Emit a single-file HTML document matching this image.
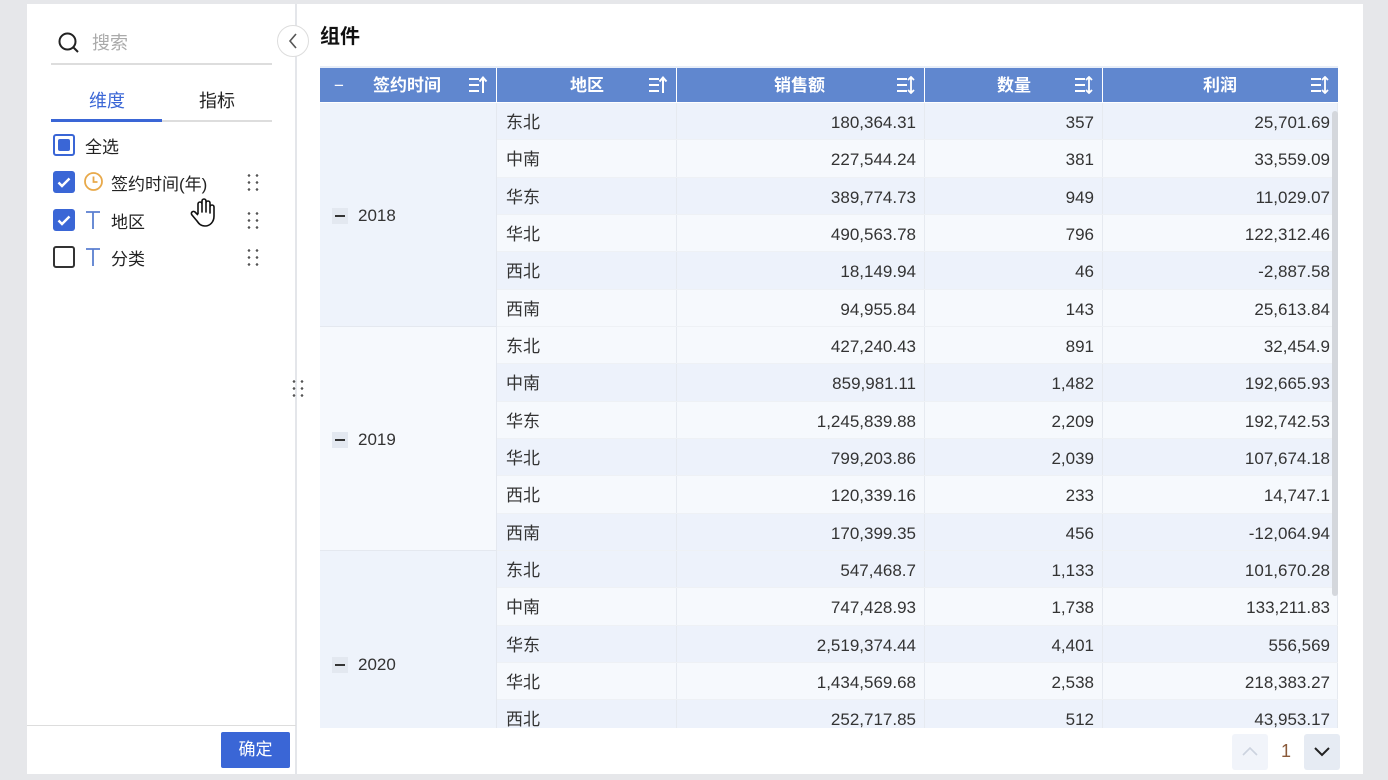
<!DOCTYPE html>
<html><head><meta charset="utf-8"><style>
*{box-sizing:border-box;margin:0;padding:0}
body{width:1388px;height:780px;background:#e6e7ea;font-family:"Liberation Sans","Noto Sans CJK SC",sans-serif;position:relative;overflow:hidden;color:#333}
.panel{position:absolute;left:27px;top:4px;width:1336px;height:770px;background:#fff}
.abs{position:absolute}
.cb{position:absolute;left:53px;width:22px;height:22px;border-radius:3px}
.on{background:#3a66d6}
.on svg{position:absolute;left:3px;top:3px}
.lbl{position:absolute;font-size:17px;color:#222}
.dots{position:absolute;left:245px;width:14px;height:20px;background-image:radial-gradient(circle,#555 1.2px,transparent 1.4px);background-size:8px 7px}
.hdr{position:absolute;top:68px;height:34px;background:#6087cf;color:#fff;font-weight:bold;font-size:17px;line-height:35px;border-right:1px solid #fff}
.sort{position:absolute;right:8px;top:8px}
.grid{position:absolute;left:320px;top:103px;width:1018px;height:625px;overflow:hidden}
.yr{position:absolute;left:0;width:177px;height:224px;border-right:1px solid #e4e8ef;border-bottom:1px solid #e4e8ef;font-size:17px}
.yr span.m{position:absolute;left:12px;width:16px;height:16px;background:#e3e8f0;top:105px}
.yr span.m:after{content:"";position:absolute;left:3px;top:7px;width:10px;height:1.5px;background:#333}
.yr b{position:absolute;left:38px;top:103px;font-weight:normal;color:#333}
.row{position:absolute;left:177px;width:841px;height:37.33px;font-size:17px;line-height:39px;display:flex;border-bottom:1px solid #eef1f5}
.row div{border-right:1px solid #e6eaf0;padding:0 8px;text-align:right;white-space:nowrap}
.row div:first-child{width:180px;text-align:left;padding-left:9px}
.row div:nth-child(2){width:248px}
.row div:nth-child(3){width:178px}
.row div:nth-child(4){width:235px;padding-right:7px}
.a{background:#edf2fb}.b{background:#f6f9fd}
.T{position:absolute;left:84px}
</style></head><body>
<div class="panel"></div>
<svg class="abs" style="left:57px;top:31px" width="24" height="24" viewBox="0 0 24 24"><circle cx="10.5" cy="10.5" r="8" fill="none" stroke="#222" stroke-width="2"/><path d="M16.5 16.5L21 21" stroke="#222" stroke-width="2"/></svg>
<div class="abs" style="left:92px;top:29px;font-size:18px;color:#aaa">搜索</div>
<div class="abs" style="left:51px;top:63px;width:221px;height:2px;background:#ddd"></div>
<div class="abs" style="left:89px;top:87px;font-size:18px;color:#3a66d6">维度</div>
<div class="abs" style="left:199px;top:87px;font-size:18px;color:#222">指标</div>
<div class="abs" style="left:51px;top:120px;width:221px;height:2px;background:#ddd"></div>
<div class="abs" style="left:51px;top:119px;width:111px;height:3px;background:#3a66d6"></div>
<div class="cb" style="top:134px;border:2px solid #3a66d6"><div style="position:absolute;left:3px;top:3px;width:12px;height:12px;background:#3a66d6;border-radius:2px"></div></div>
<div class="lbl" style="left:85px;top:133px">全选</div>
<div class="cb on" style="top:171px"><svg width="16" height="16" viewBox="0 0 16 16"><path d="M2.5 8.5l3.5 3.5 7.5-7.5" stroke="#fff" stroke-width="2.4" fill="none"/></svg></div>
<svg class="abs" style="left:83px;top:171px" width="21" height="21" viewBox="0 0 21 21"><circle cx="10.5" cy="10.5" r="8.5" fill="none" stroke="#e8a94a" stroke-width="1.8"/><path d="M10.5 5.5v5.5h4" stroke="#e8a94a" stroke-width="1.8" fill="none"/></svg>
<div class="lbl" style="left:111px;top:170px">签约时间(年)</div>
<div class="dots" style="left:245px;top:172px"></div>
<div class="cb on" style="top:209px"><svg width="16" height="16" viewBox="0 0 16 16"><path d="M2.5 8.5l3.5 3.5 7.5-7.5" stroke="#fff" stroke-width="2.4" fill="none"/></svg></div>
<svg class="T" style="top:210px" width="18" height="20" viewBox="0 0 18 20"><path d="M2 2h14M9 2v17" stroke="#5a7fd0" stroke-width="1.8"/></svg>
<div class="lbl" style="left:111px;top:208px">地区</div>
<div class="dots" style="left:245px;top:210px"></div>
<div class="cb" style="top:246px;border:2px solid #333"></div>
<svg class="T" style="top:247px" width="18" height="20" viewBox="0 0 18 20"><path d="M2 2h14M9 2v17" stroke="#5a7fd0" stroke-width="1.8"/></svg>
<div class="lbl" style="left:111px;top:245px">分类</div>
<div class="dots" style="left:245px;top:247px"></div>
<svg class="abs" style="left:189px;top:198px" width="28" height="30" viewBox="0 0 28 30"><path d="M9 16V6a2 2 0 014 0v8V3a2 2 0 014 0v11V5a2 2 0 014 0v10V9a2 2 0 014 0v9c0 6-4 10-9 10-4 0-6-2-8-5l-5-6a2 2 0 013-3l3 3" fill="#fff" stroke="#111" stroke-width="1.6" stroke-linejoin="round"/></svg>
<div class="abs" style="left:295px;top:4px;width:2px;height:770px;background:#e4e6ea"></div>
<div class="abs" style="left:277px;top:25px;width:32px;height:32px;border-radius:50%;background:#fff;border:1px solid #ddd"></div>
<svg class="abs" style="left:286px;top:32px" width="14" height="18" viewBox="0 0 14 18"><path d="M10 2L4 9l6 7" stroke="#555" stroke-width="1.6" fill="none"/></svg>
<div class="dots" style="left:290px;top:378px;height:22px;width:14px"></div>
<div class="abs" style="left:27px;top:725px;width:269px;height:1px;background:#ddd"></div>
<div class="abs" style="left:221px;top:732px;width:69px;height:36px;background:#3a66d6;color:#fff;font-size:17px;line-height:36px;text-align:center;border-radius:2px">确定</div>
<div class="abs" style="left:320px;top:20px;font-size:20px;font-weight:bold;color:#111">组件</div>
<div class="abs" style="left:320px;top:66px;width:1018px;height:2px;background:#e8eef8"></div>
<div class="hdr" style="left:320px;width:177px"><span style="position:absolute;left:14px;font-weight:normal">−</span><span style="position:absolute;left:53px">签约时间</span><svg class="sort" width="20" height="18" viewBox="0 0 20 18"><path d="M1 3h10M1 9h10M1 15h10" stroke="#fff" stroke-width="2"/><path d="M15 17V2M11.5 5.5L15 1.5l3.5 4" stroke="#fff" stroke-width="2" fill="none"/></svg></div>
<div class="hdr" style="left:497px;width:180px"><span style="position:absolute;left:73px">地区</span><svg class="sort" width="20" height="18" viewBox="0 0 20 18"><path d="M1 3h10M1 9h10M1 15h10" stroke="#fff" stroke-width="2"/><path d="M15 17V2M11.5 5.5L15 1.5l3.5 4" stroke="#fff" stroke-width="2" fill="none"/></svg></div>
<div class="hdr" style="left:677px;width:248px"><span style="position:absolute;left:97px">销售额</span><svg class="sort" width="20" height="18" viewBox="0 0 20 18"><path d="M1 3h10M1 9h10M1 15h10" stroke="#fff" stroke-width="2"/><path d="M15 1v16M12 4l3-3 3 3M12 14l3 3 3-3" stroke="#fff" stroke-width="1.8" fill="none"/></svg></div>
<div class="hdr" style="left:925px;width:178px"><span style="position:absolute;left:72px">数量</span><svg class="sort" width="20" height="18" viewBox="0 0 20 18"><path d="M1 3h10M1 9h10M1 15h10" stroke="#fff" stroke-width="2"/><path d="M15 1v16M12 4l3-3 3 3M12 14l3 3 3-3" stroke="#fff" stroke-width="1.8" fill="none"/></svg></div>
<div class="hdr" style="left:1103px;width:235px;border-right:none"><span style="position:absolute;left:100px">利润</span><svg class="sort" width="20" height="18" viewBox="0 0 20 18"><path d="M1 3h10M1 9h10M1 15h10" stroke="#fff" stroke-width="2"/><path d="M15 1v16M12 4l3-3 3 3M12 14l3 3 3-3" stroke="#fff" stroke-width="1.8" fill="none"/></svg></div>
<div class="grid">
<div class="yr" style="top:0;background:#eef3fb"><span class="m"></span><b>2018</b></div>
<div class="yr" style="top:224px;background:#f6f9fd"><span class="m"></span><b>2019</b></div>
<div class="yr" style="top:448px;height:224px;background:#eef3fb"><span class="m" style="top:106px"></span><b style="top:104px">2020</b></div>
<div class="row a" style="top:0"><div>东北</div><div>180,364.31</div><div>357</div><div>25,701.69</div></div>
<div class="row b" style="top:37.33px"><div>中南</div><div>227,544.24</div><div>381</div><div>33,559.09</div></div>
<div class="row a" style="top:74.67px"><div>华东</div><div>389,774.73</div><div>949</div><div>11,029.07</div></div>
<div class="row b" style="top:112px"><div>华北</div><div>490,563.78</div><div>796</div><div>122,312.46</div></div>
<div class="row a" style="top:149.33px"><div>西北</div><div>18,149.94</div><div>46</div><div>-2,887.58</div></div>
<div class="row b" style="top:186.67px"><div>西南</div><div>94,955.84</div><div>143</div><div>25,613.84</div></div>
<div class="row b" style="top:224px"><div>东北</div><div>427,240.43</div><div>891</div><div>32,454.9</div></div>
<div class="row a" style="top:261.33px"><div>中南</div><div>859,981.11</div><div>1,482</div><div>192,665.93</div></div>
<div class="row b" style="top:298.67px"><div>华东</div><div>1,245,839.88</div><div>2,209</div><div>192,742.53</div></div>
<div class="row a" style="top:336px"><div>华北</div><div>799,203.86</div><div>2,039</div><div>107,674.18</div></div>
<div class="row b" style="top:373.33px"><div>西北</div><div>120,339.16</div><div>233</div><div>14,747.1</div></div>
<div class="row a" style="top:410.67px"><div>西南</div><div>170,399.35</div><div>456</div><div>-12,064.94</div></div>
<div class="row a" style="top:448px"><div>东北</div><div>547,468.7</div><div>1,133</div><div>101,670.28</div></div>
<div class="row b" style="top:485.33px"><div>中南</div><div>747,428.93</div><div>1,738</div><div>133,211.83</div></div>
<div class="row a" style="top:522.67px"><div>华东</div><div>2,519,374.44</div><div>4,401</div><div>556,569</div></div>
<div class="row b" style="top:560px"><div>华北</div><div>1,434,569.68</div><div>2,538</div><div>218,383.27</div></div>
<div class="row a" style="top:597.33px"><div>西北</div><div>252,717.85</div><div>512</div><div>43,953.17</div></div>
<div class="abs" style="left:1012px;top:8px;width:6px;height:485px;background:#d4d7dc;border-radius:3px"></div>
</div>
<div class="abs" style="left:1232px;top:734px;width:36px;height:36px;background:#f1f4fa;border-radius:3px"></div>
<svg class="abs" style="left:1240px;top:744px" width="20" height="14" viewBox="0 0 20 14"><path d="M3 11l7-7 7 7" stroke="#ccd3df" stroke-width="1.6" fill="none"/></svg>
<div class="abs" style="left:1281px;top:741px;font-size:18px;color:#8a5a3a">1</div>
<div class="abs" style="left:1304px;top:734px;width:36px;height:36px;background:#e6ebf3;border-radius:3px"></div>
<svg class="abs" style="left:1312px;top:744px" width="20" height="14" viewBox="0 0 20 14"><path d="M3 4l7 7 7-7" stroke="#222" stroke-width="2" fill="none"/></svg>
</body></html>
